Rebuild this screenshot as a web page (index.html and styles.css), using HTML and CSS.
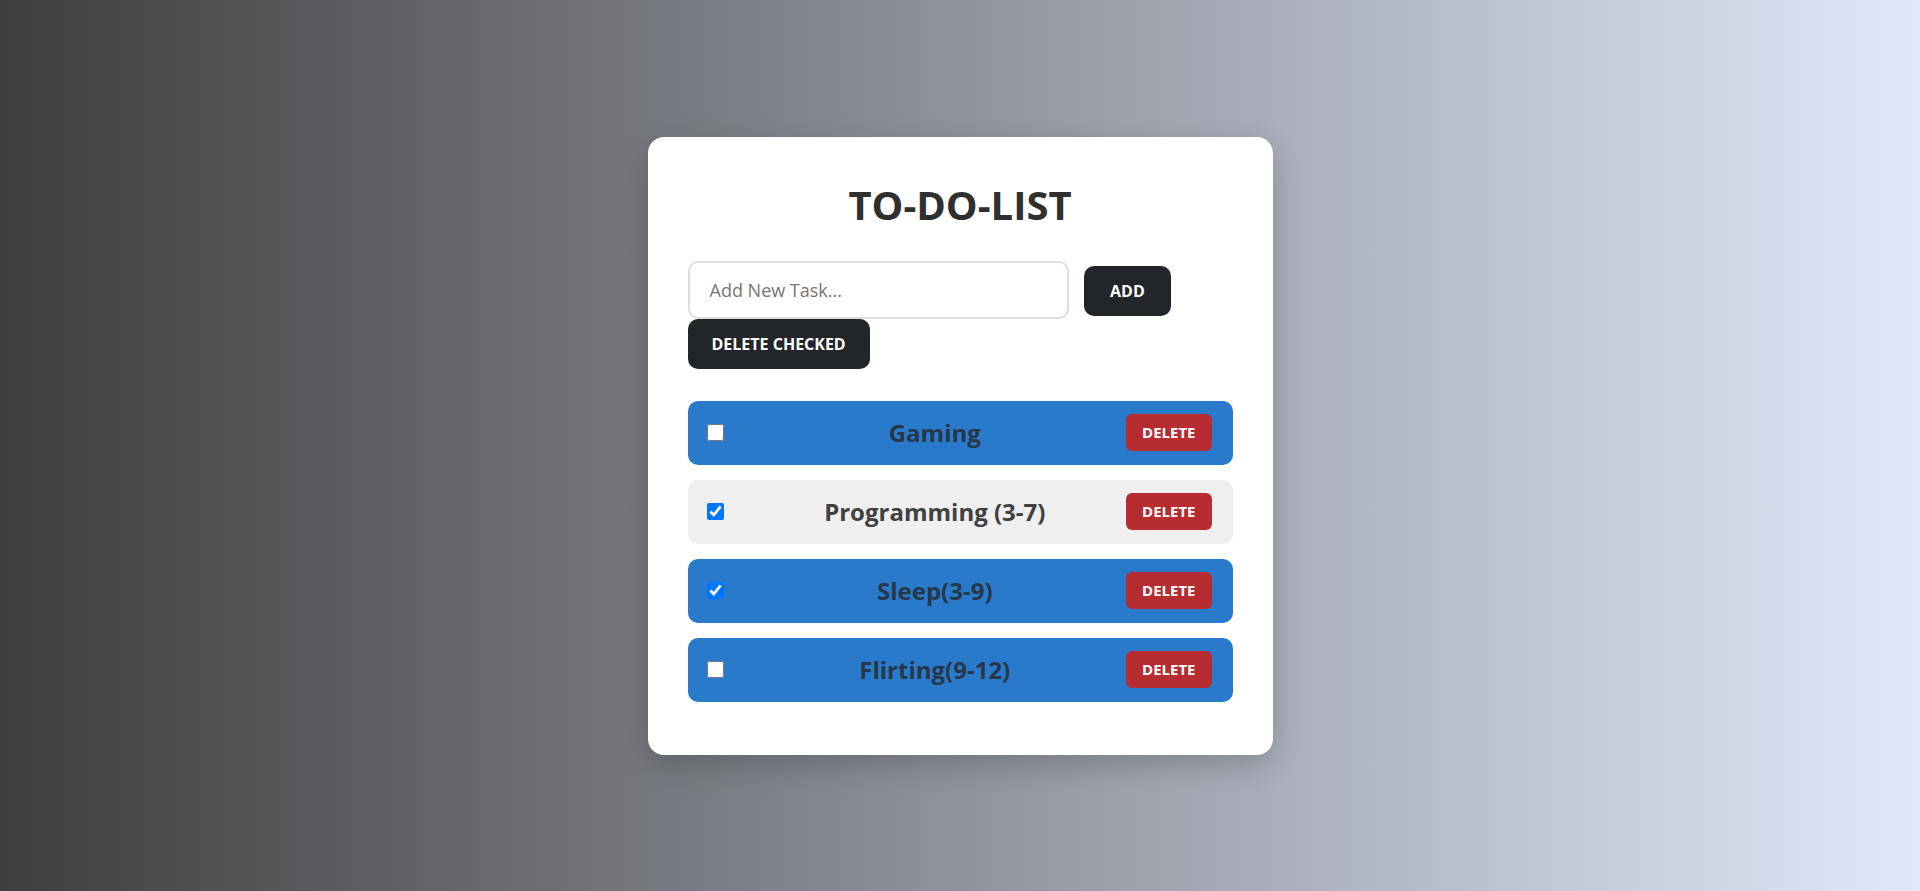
FILE: index.html
```html
<!DOCTYPE html>
<html lang="en">
<head>
<meta charset="UTF-8">
<title>To-Do List</title>
<link rel="stylesheet" href="styles.css">
</head>
<body>
  <div class="card">
    <h1 class="title">TO-DO-LIST</h1>
    <div class="controls">
      <input class="task-input" type="text" placeholder="Add New Task...">
      <button class="btn btn-add">ADD</button>
      <button class="btn btn-clear">DELETE CHECKED</button>
    </div>
    <ul class="task-list">
      <li class="task">
        <input class="task-check" type="checkbox">
        <span class="task-text">Gaming</span>
        <button class="btn-delete">DELETE</button>
      </li>
      <li class="task task-muted">
        <input class="task-check" type="checkbox" checked>
        <span class="task-text">Programming (3-7)</span>
        <button class="btn-delete">DELETE</button>
      </li>
      <li class="task">
        <input class="task-check" type="checkbox" checked>
        <span class="task-text">Sleep(3-9)</span>
        <button class="btn-delete">DELETE</button>
      </li>
      <li class="task">
        <input class="task-check" type="checkbox">
        <span class="task-text">Flirting(9-12)</span>
        <button class="btn-delete">DELETE</button>
      </li>
    </ul>
  </div>
</body>
</html>
```

FILE: styles.css
```css
* {
  box-sizing: border-box;
}

html, body {
  height: 100%;
}

body {
  margin: 0;
  font-family: "Open Sans", "Noto Sans", "Liberation Sans", sans-serif;
  background: linear-gradient(to right, #3e3e3e, #e0e8fa);
  display: flex;
  align-items: center;
  justify-content: center;
}

.card {
  width: 625px;
  background: #ffffff;
  border-radius: 16px;
  padding: 40px 40px 38px;
  box-shadow: 0 10px 30px rgba(0, 0, 0, 0.2);
}

.title {
  margin: 0 0 29px;
  text-align: center;
  font-size: 40px;
  font-weight: 700;
  color: #2f2f2f;
}

.controls {
  display: flex;
  flex-wrap: wrap;
  align-items: baseline;
  column-gap: 15px;
}

.task-input {
  width: 70%;
  height: 58px;
  padding: 0 20px;
  border: 2px solid #dddddd;
  border-radius: 10px;
  font-family: inherit;
  font-size: 18px;
  color: #333;
  outline: none;
}

.task-input::placeholder {
  color: #757575;
}

.btn {
  border: none;
  border-radius: 10px;
  background: #22262b;
  color: #ffffff;
  font-family: inherit;
  font-size: 16px;
  font-weight: 700;
  padding: 15px 26px;
  line-height: 20px;
  cursor: pointer;
}

.btn-clear {
  padding: 15px 24px;
}

.task-list {
  list-style: none;
  margin: 32px 0 0;
  padding: 0;
}

.task {
  display: flex;
  align-items: center;
  height: 64px;
  padding: 0 21px 0 19px;
  margin-bottom: 15px;
  background: #2a7acb;
  border-radius: 10px;
}

.task-muted {
  background: #efefef;
}

.task-check {
  width: 17px;
  height: 17px;
  margin: 0;
}

.task-text {
  flex: 1;
  margin-left: 20px;
  text-align: center;
  font-size: 24px;
  font-weight: 700;
  color: #27374a;
}

.task-muted .task-text {
  color: #404040;
}

.btn-delete {
  border: none;
  border-radius: 6px;
  background: #b72c30;
  color: #ffffff;
  font-family: inherit;
  font-size: 15px;
  font-weight: 700;
  line-height: 19px;
  padding: 9px 16px;
  cursor: pointer;
}
```
